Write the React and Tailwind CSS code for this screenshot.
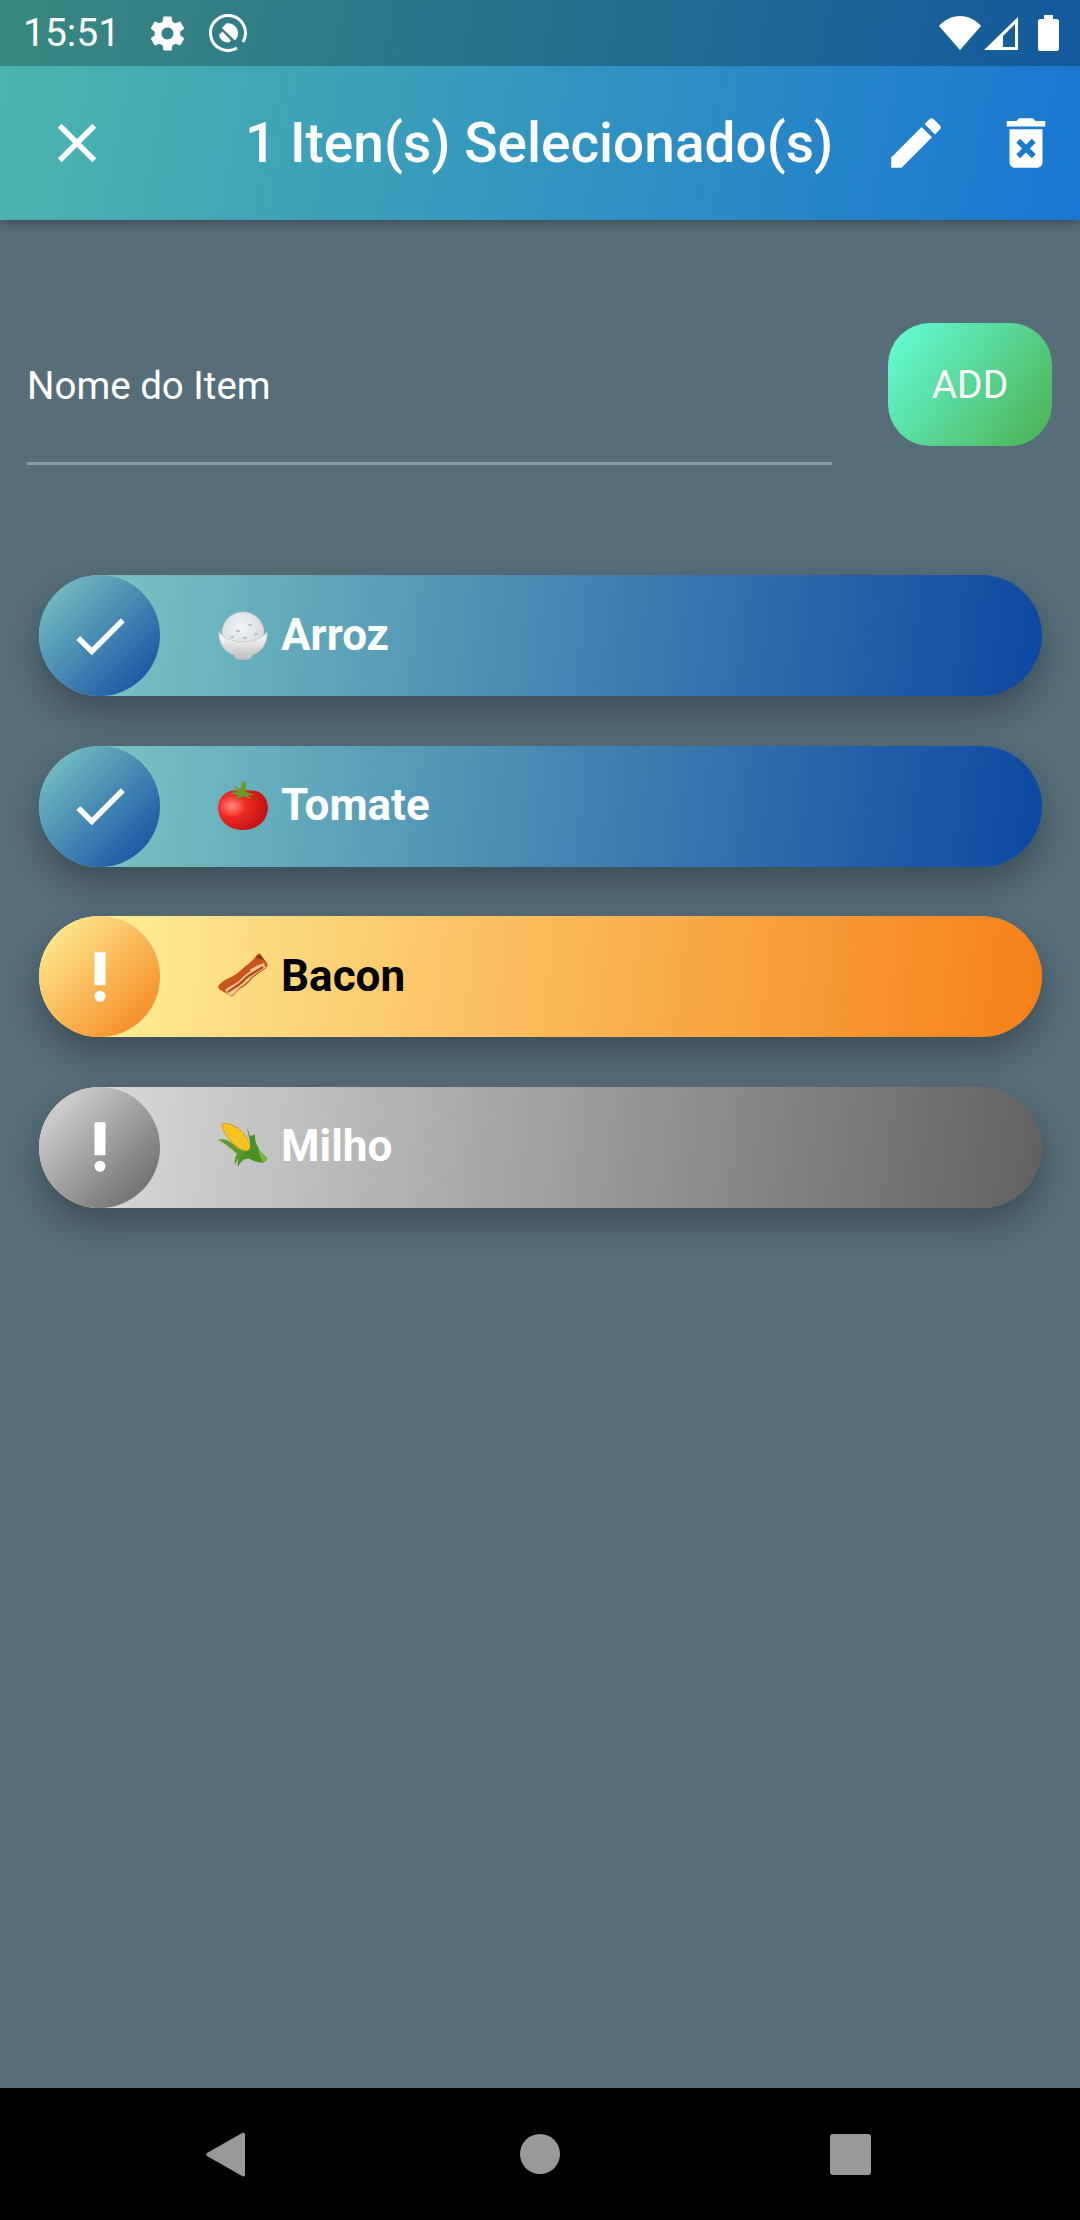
import React from "react";

const items = [
  { name: "Arroz", emoji: "rice", kind: "done" },
  { name: "Tomate", emoji: "tomato", kind: "done" },
  { name: "Bacon", emoji: "bacon", kind: "warn" },
  { name: "Milho", emoji: "corn", kind: "off" },
];

const kinds = {
  done: {
    bar: "bg-linear-[97deg,#80cbc4,#0d47a1]",
    circle: "bg-linear-[135deg,#80cbc4,#0d47a1]",
    text: "text-white",
  },
  warn: {
    bar: "bg-linear-[97deg,#fff59d,#f57f17]",
    circle: "bg-linear-[135deg,#fff59d,#f57f17]",
    text: "text-black",
  },
  off: {
    bar: "bg-linear-[97deg,#e0e0e0,#616161]",
    circle: "bg-linear-[135deg,#e0e0e0,#616161]",
    text: "text-white",
  },
};

const Icon = ({ d, size = 66, className = "" }) => (
  <svg viewBox="0 0 24 24" width={size} height={size} fill="white" className={`shrink-0 ${className}`}>
    <path d={d} />
  </svg>
);

const CLOSE = "M19 6.41L17.59 5 12 10.59 6.41 5 5 6.41 10.59 12 5 17.59 6.41 19 12 13.41 17.59 19 19 17.59 13.41 12z";
const EDIT = "M3 17.25V21h3.75L17.81 9.94l-3.75-3.75L3 17.25zM20.71 7.04c.39-.39.39-1.02 0-1.41l-2.34-2.34c-.39-.39-1.02-.39-1.41 0l-1.83 1.83 3.75 3.75 1.83-1.83z";
const TRASH = "M6 19c0 1.1.9 2 2 2h8c1.1 0 2-.9 2-2V7H6v12zm2.46-7.12l1.41-1.41L12 12.59l2.12-2.12 1.41 1.41L13.41 14l2.12 2.12-1.41 1.41L12 15.41l-2.12 2.12-1.41-1.41L10.59 14l-2.13-2.12zM15.5 4l-1-1h-5l-1 1H5v2h14V4z";
const CHECK = "M9 16.17L4.83 12l-1.42 1.41L9 19 21 7l-1.41-1.41z";
const PRIORITY = "M10 3h4v12h-4z M14 19a2 2 0 1 1-4 0 2 2 0 0 1 4 0z";
const GEAR = "M19.43 12.98c.04-.32.07-.64.07-.98s-.03-.66-.07-.98l2.11-1.65c.19-.15.24-.42.12-.64l-2-3.46c-.12-.22-.39-.3-.61-.22l-2.49 1c-.52-.4-1.08-.73-1.69-.98l-.38-2.65C14.46 2.18 14.25 2 14 2h-4c-.25 0-.46.18-.49.42l-.38 2.65c-.61.25-1.17.59-1.69.98l-2.49-1c-.23-.09-.49 0-.61.22l-2 3.46c-.13.22-.07.49.12.64l2.11 1.65c-.04.32-.07.65-.07.98s.03.66.07.98l-2.11 1.65c-.19.15-.24.42-.12.64l2 3.46c.12.22.39.3.61.22l2.49-1c.52.4 1.08.73 1.69.98l.38 2.65c.03.24.24.42.49.42h4c.25 0 .46-.18.49-.42l.38-2.65c.61-.25 1.17-.59 1.69-.98l2.49 1c.23.09.49 0 .61-.22l2-3.46c.12-.22.07-.49-.12-.64l-2.11-1.65zM12 15.5c-1.93 0-3.5-1.57-3.5-3.5s1.57-3.5 3.5-3.5 3.5 1.57 3.5 3.5-1.57 3.5-3.5 3.5z";

const Emoji = ({ type }) => {
  if (type === "rice")
    return (
      <svg viewBox="0 0 50 50" width="50" height="50" className="shrink-0">
        <defs>
          <radialGradient id="riceTop" cx="0.45" cy="0.35" r="0.7">
            <stop offset="0" stopColor="#f2f5f7" />
            <stop offset="1" stopColor="#cdd6dc" />
          </radialGradient>
          <linearGradient id="riceBowl" x1="0" y1="0" x2="0" y2="1">
            <stop offset="0" stopColor="#ffffff" />
            <stop offset="1" stopColor="#bdbdbd" />
          </linearGradient>
        </defs>
        <circle cx="25" cy="22" r="21" fill="url(#riceTop)" stroke="#c9c9c9" strokeWidth="1" />
        <ellipse cx="20" cy="20" rx="2" ry="1.2" fill="#b5c3cc" />
        <ellipse cx="32" cy="14" rx="2" ry="1.2" fill="#b5c3cc" />
        <ellipse cx="38" cy="23" rx="2" ry="1.2" fill="#b5c3cc" />
        <ellipse cx="14" cy="26" rx="2" ry="1.2" fill="#b5c3cc" />
        <ellipse cx="27" cy="27" rx="2" ry="1.2" fill="#b5c3cc" />
        <path d="M1 21c8 13 40 13 48 0 1 11-6 21-15 23l-1 3c-4 2-12 2-16 0l-1-3C7 42 0 32 1 21z" fill="url(#riceBowl)" stroke="#bdbdbd" strokeWidth="0.6" />
      </svg>
    );
  if (type === "tomato")
    return (
      <svg viewBox="0 0 50 50" width="50" height="50" className="shrink-0">
        <defs>
          <radialGradient id="tomatoBody" cx="0.28" cy="0.4" r="0.8">
            <stop offset="0" stopColor="#ff8a80" />
            <stop offset="0.35" stopColor="#ee2a24" />
            <stop offset="1" stopColor="#b80d0d" />
          </radialGradient>
        </defs>
        <path d="M25 10c12-3 24 2 25 16 0 14-11 23-25 23S0 40 0 26C1 12 13 7 25 10z" fill="url(#tomatoBody)" />
        <path d="M25 0l3 1 0 10 10 3-8 0 4 4-9-3-7 4 2-5-9-1 9-3-5-6 7 4z" fill="#6c9a2b" />
      </svg>
    );
  if (type === "bacon")
    return (
      <svg viewBox="0 0 50 50" width="50" height="50" className="shrink-0">
        {/* strip, then the fat lines on top of it */}
        <path d="M1 33c7-8 14-7 21-14 6-6 11-8 16-15 2-3 4-3 5-1l6 8c1 2 1 3-1 5-6 5-11 7-16 13-5 6-11 7-15 13-2 3-4 3-6 1L1 37c-1-1-1-3 0-4z" fill="#c9531c" />
        <path d="M38 5c2-2 4-2 5-1l3 4c-4-1-6-2-8-3z" fill="#7a3415" />
        <path d="M32 18c5-4 9-5 14-7l1 1c-5 3-10 5-14 9z" fill="#eec39a" />
        <path d="M7 38c6-5 12-6 17-12 6-7 15-9 21-14l3 3c-6 5-12 7-16 12-5 6-10 7-15 14-2 3-4 3-6 2z" fill="#f0c890" />
        <path d="M10 40c6-5 12-7 17-13 5-5 11-7 18-12" fill="none" stroke="#b5431a" strokeWidth="2.2" />
      </svg>
    );
  return (
    <svg viewBox="0 0 50 50" width="50" height="50" className="shrink-0">
      <path d="M4 2c8-2 18 4 24 13 3 5 5 9 4 13-4 2-9 0-14-4C10 17 4 9 4 2z" fill="#f5c422" stroke="#e49a13" strokeWidth="1" />
      <path d="M0 18c6-2 12 1 16 5 4 4 9 6 13 6l1 3c-5 2-11 4-13 11-1-5 0-8 2-11-5-4-11-11-19-14z" fill="#5d9a2d" />
      <path d="M29 6c2 3 2 6 3 8 2-1 3 0 5-2 0 5 0 8 3 13 2 5 5 7 9 11l-1 3-3 2c-3-1-9-1-13-4-4-1-9 1-12 8-1-4 0-8 3-11 3-4 8-5 9-8 1-7-2-14-3-20z" fill="#4c9128" />
      <path d="M40 25c2 5 5 7 9 11l-1 3-3 2c-2-5-5-11-5-16z" fill="#7cb53a" />
    </svg>
  );
};

const Row = ({ item }) => {
  const k = kinds[item.kind];
  return (
    <div className={`flex items-center h-[121px] rounded-full shadow-[0_16px_34px_rgba(0,0,0,0.3)] ${k.bar}`}>
      <div className={`flex items-center justify-center w-[121px] h-[121px] rounded-full ${k.circle}`}>
        <Icon d={item.kind === "done" ? CHECK : PRIORITY} />
      </div>
      <div className="ml-[58px]">
        <Emoji type={item.emoji} />
      </div>
      <span className={`ml-[13px] pb-[2px] text-[44px] font-bold leading-none ${k.text}`}>{item.name}</span>
    </div>
  );
};

export default function App() {
  return (
    <div className="w-[1080px] h-[2220px] flex flex-col bg-[#566e7a] font-['Roboto',sans-serif] text-white overflow-hidden">
      <div className="relative z-10 h-[220px] shrink-0 bg-linear-[101.5deg,#4db6ac,#1976d2] shadow-[0_3px_10px_rgba(0,0,0,0.3)]">
        {/* status bar */}
        <div className="flex items-center h-[66px] bg-black/25 pl-[23px] pr-[21px]">
          <span className="text-[39px] leading-none w-[124px]">15:51</span>
          <Icon d={GEAR} size={41} />
          <svg viewBox="0 0 40 40" width="40" height="40" className="ml-[20px] shrink-0">
            <path d="M29 35A17.500 17.500 0 1 1 35 29" fill="none" stroke="white" strokeWidth="3" />
            <path d="M14 15L18 10.500A10 10 0 0 1 27 27.500L16 17z" fill="white" />
            <path d="M11 22L14.500 18.500L23 27.500L21 29.500A9 9 0 0 1 11 22z" fill="white" />
          </svg>
          <div className="flex-1" />
          <svg viewBox="0 0 42 34" width="42" height="34" className="shrink-0">
            <path d="M0 10C5 4 13 0 21 0s16 4 21 10L21 34z" fill="white" />
          </svg>
          <svg viewBox="0 0 34 33" width="34" height="33" className="ml-[3px] shrink-0">
            <path d="M34 0v33H0zM31 7L19 19v11h12z" fill="white" fillRule="evenodd" />
          </svg>
          <svg viewBox="0 0 21 36" width="21" height="36" className="ml-[20px] shrink-0">
            <path d="M6 0h9v4h4c1 0 2 1 2 2v28c0 1-1 2-2 2H2c-1 0-2-1-2-2V6c0-1 1-2 2-2h4z" fill="white" />
          </svg>
        </div>
        {/* app bar */}
        <div className="flex items-center h-[154px]">
          <Icon d={CLOSE} className="ml-[44px]" />
          <span className="ml-[135px] text-[55px] font-medium leading-none whitespace-nowrap">1 Iten(s) Selecionado(s)</span>
          <Icon d={EDIT} className="ml-[50px]" />
          <Icon d={TRASH} className="ml-[44px]" />
        </div>
      </div>

      <div className="flex-1 min-h-0">
        <div className="flex items-start pl-[27px] pr-[28px] pt-[103px]">
          <div className="w-[805px] h-[142px] border-b-[3px] border-[#8a9ba5] pt-[41px]">
            <span className="text-[38.5px] leading-[44px] text-white">Nome do Item</span>
          </div>
          <button className="ml-[56px] pt-[2px] w-[164px] h-[123px] rounded-[42px] bg-linear-[127deg,#64ffda,#4caf50] text-[39px] text-white">
            ADD
          </button>
        </div>

        <div className="flex flex-col gap-[49.5px] pl-[39px] pr-[38px] mt-[110px]">
          {items.map((item) => (
            <Row key={item.name} item={item} />
          ))}
        </div>
      </div>

      {/* nav bar */}
      <div className="relative h-[132px] shrink-0 bg-black flex items-center">
        <svg viewBox="0 0 39 45" width="39" height="45" className="ml-[206px] shrink-0">
          <path d="M37 0.5c1 0 2 1 2 2v40c0 1.500-1 2-2 2L1 24c-1-1-1-2 0-3z" fill="#999" />
        </svg>
        <div className="ml-[275px] w-[40px] h-[40px] rounded-full bg-[#999]" />
        <div className="ml-[270px] w-[41px] h-[41px] rounded-[3px] bg-[#999]" />
      </div>
    </div>
  );
}
